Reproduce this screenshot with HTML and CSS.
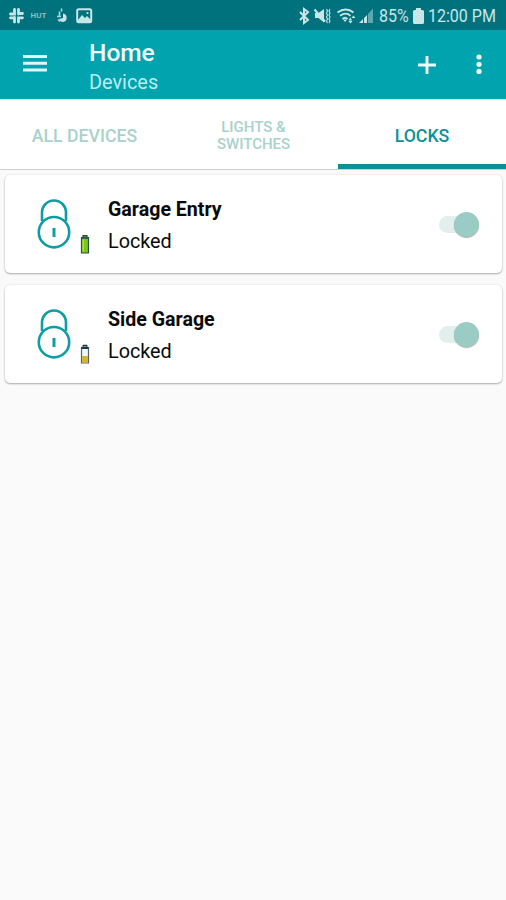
FILE: index.html
```html
<!DOCTYPE html>
<html lang="en">
<head>
  <meta charset="UTF-8">
  <title>Home - Devices</title>
  <meta name="viewport" content="width=device-width, initial-scale=1.0">
  <link rel="stylesheet" href="styles.css">
</head>
<body>
  <div class="status-bar">
    <div class="status-left">
      <svg width="86" height="18" viewBox="0 0 86 18">
        <g fill="none" stroke="#c7e6e8" stroke-width="2.8" stroke-linecap="round">
          <path d="M6.5 2.5v4.500H2.500M10.500 2.500v4.500M10.500 6.500h4M2.500 10.800h4M6.500 10.500v4.500M14.500 10.800h-4v4.200"/>
        </g>
        <text x="22.5" y="10.5" class="tiny" textLength="16" lengthAdjust="spacingAndGlyphs">HUT</text>
        <path d="M55 6.500a4.300 4.300 0 0 1 0 8.500q-3 0-4-3l4-1z" fill="#c7e6e8"/>
        <path d="M53.500 1.500v3M51.500 4.500v4.500M49 9.500h4M50 12.500l2 2" fill="none" stroke="#a9d5d8" stroke-width="1.600"/>
        <rect x="69.2" y="2.2" width="14" height="13" rx="1.5" fill="none" stroke="#c7e6e8" stroke-width="2"/>
        <path d="M70 13l4-5 3 3 2-2 4 4v2H70z" fill="#c7e6e8"/>
        <circle cx="79.5" cy="6" r="1.1" fill="#c7e6e8"/>
      </svg>
    </div>
    <div class="status-right">
      <svg width="78" height="18" viewBox="0 0 78 18">
        <path d="M2 5l8 8-4 3V2l4 3-8 8" fill="none" stroke="#c7e6e8" stroke-width="2"/>
        <path d="M17 6h3.500L26 2v13.500l-5.500-4.500h-3.500z" fill="#c7e6e8"/>
        <path d="M16.500 2.500l10.500 12" stroke="#c7e6e8" stroke-width="2"/>
        <path d="M28.500 2l1 2-1 2 1 2-1 2 1 2-1 2 1 2M32 2l-1 2 1 2-1 2 1 2-1 2 1 2-1 2" fill="none" stroke="#c7e6e8" stroke-width="1.100"/>
        <path d="M39.500 5.500q8.500-6 16 0M42 8.800q6-4.400 10.500 0M44.500 12q2.500-2.500 5 0" fill="none" stroke="#c7e6e8" stroke-width="1.800"/>
        <path d="M47 15l-2-2.500h4zM50.500 13.500l1.800-3 1.800 3zM53.500 11h4l-2-2.500zM50.500 14h4l-2 2.500z" fill="#c7e6e8"/>
        <path d="M61 16l4-4v4zM66 16v-5l3-3v8z" fill="#c7e6e8"/>
        <path d="M70 16V7l5-5.500V16z" fill="#5ba8ae"/>
      </svg>
      <span class="percent">85%</span>
      <svg class="status-battery" width="11" height="16" viewBox="0 0 11 16">
        <path d="M3 0h5v2h1.500q1.500 0 1.500 1.500v11q0 1.500-1.500 1.500h-8Q0 16 0 14.500v-11Q0 2 1.500 2H3z" fill="#c7e6e8"/>
      </svg>
      <span class="clock">12:00 PM</span>
    </div>
  </div>

  <header class="app-bar">
    <svg class="menu-icon" width="24" height="18" viewBox="0 0 24 18">
      <path d="M0 2.500h24M0 9.200h24M0 16h24" stroke="#dcf9fa" stroke-width="2.900"/>
    </svg>
    <div class="titles">
      <h1>Home</h1>
      <h2>Devices</h2>
    </div>
    <svg class="add-icon" width="18" height="18" viewBox="0 0 18 18">
      <path d="M9 0v18M0 9h18" stroke="#effdfd" stroke-width="2.900"/>
    </svg>
    <svg class="more-icon" width="6" height="20" viewBox="0 0 6 20">
      <g fill="#effdfd">
        <circle cx="3" cy="3" r="2.600"/>
        <circle cx="3" cy="10.300" r="2.600"/>
        <circle cx="3" cy="17.400" r="2.600"/>
      </g>
    </svg>
  </header>

  <nav class="tabs">
    <a class="tab">ALL DEVICES</a>
    <a class="tab small">LIGHTS &amp;<br>SWITCHES</a>
    <a class="tab active">LOCKS</a>
  </nav>

  <main class="devices">
    <div class="card">
      <svg class="lock" width="36" height="52" viewBox="0 0 36 52">
        <g fill="none" stroke="#0d9da3" stroke-width="2.600">
          <path d="M6 22V13.500a12 12 0 0 1 24 0V22"/>
          <circle cx="18" cy="33.200" r="15.200"/>
        </g>
        <path d="M18 29v9" stroke="#0d9da3" stroke-width="3"/>
      </svg>
      <svg class="battery" width="10" height="20" viewBox="0 0 10 20">
        <path d="M3 1.500h4v2h1.500v15.500h-7V3.500H3z" fill="#7cc51b" stroke="#2b5140" stroke-width="1.200"/>
        <path d="M3 1.700h4M1.500 4h7" stroke="#1d4b50" stroke-width="1.500"/>
        <path d="M3.300 5.500v12" stroke="#a8df4a" stroke-width="1.500"/>
      </svg>
      <div class="info">
        <div class="name">Garage Entry</div>
        <div class="state">Locked</div>
      </div>
      <div class="switch"></div>
    </div>

    <div class="card">
      <svg class="lock" width="36" height="52" viewBox="0 0 36 52">
        <g fill="none" stroke="#0d9da3" stroke-width="2.600">
          <path d="M6 22V13.500a12 12 0 0 1 24 0V22"/>
          <circle cx="18" cy="33.200" r="15.200"/>
        </g>
        <path d="M18 29v9" stroke="#0d9da3" stroke-width="3"/>
      </svg>
      <svg class="battery" width="10" height="20" viewBox="0 0 10 20">
        <path d="M3 1.500h4v2h1.500v15.500h-7V3.500H3z" fill="#eef5f3" stroke="#56645c" stroke-width="1.200"/>
        <path d="M2.100 12h5.800v6.400H2.100z" fill="#d5b32d"/>
        <path d="M3 1.700h4M1.500 4h7" stroke="#173b45" stroke-width="1.800"/>
      </svg>
      <div class="info">
        <div class="name">Side Garage</div>
        <div class="state">Locked</div>
      </div>
      <div class="switch"></div>
    </div>
  </main>
</body>
</html>
```
FILE: styles.css
```css
* {
  box-sizing: border-box;
}

body {
  margin: 0;
  min-height: 100vh;
  font-family: Roboto, "Liberation Sans", sans-serif;
  background-color: #fafafa;
}

svg {
  display: block;
  flex: none;
}

.status-bar {
  display: flex;
  justify-content: space-between;
  height: 30px;
  padding: 7px 9px 0 8px;
  background-color: #00727e;
  color: #c7e6e8;
}

.status-right {
  display: flex;
}

.tiny {
  font-size: 7px;
  font-weight: 700;
  fill: #85bdc3;
}

.percent,
.clock {
  font-size: 17.8px;
  line-height: 18px;
  white-space: nowrap;
  transform: scaleX(0.9);
  transform-origin: left;
}

.percent {
  width: 34px;
  margin-left: 3px;
}

.clock {
  width: 69px;
  margin-left: 4px;
}

.status-battery {
  margin-top: 1px;
}

.app-bar {
  display: flex;
  height: 69px;
  padding: 0 24px 0 23px;
  background-color: #00a3ae;
}

.menu-icon {
  margin-top: 24px;
}

.titles {
  flex: 1;
  padding: 9px 0 0 42px;
}

h1,
h2 {
  margin: 0;
}

h1 {
  font-size: 24.5px;
  line-height: 28px;
  font-weight: 500;
  color: #f1fdfd;
}

h2 {
  margin-top: 3px;
  font-size: 19.9px;
  line-height: 26px;
  font-weight: 400;
  color: #b9edef;
}

.add-icon {
  margin: 26px 40px 0 0;
}

.more-icon {
  margin-top: 24px;
}

.tabs {
  display: grid;
  grid-template-columns: 169px 169px 168px;
  height: 71px;
  background-color: #fff;
  border-top: 1px solid #c9eef0;
  border-bottom: 1px solid #cfcfcf;
}

.tab {
  display: flex;
  align-items: center;
  justify-content: center;
  padding-top: 2px;
  font-size: 17.7px;
  font-weight: 500;
  text-align: center;
  color: #a9d2cb;
}

.tab.small {
  font-size: 15px;
  line-height: 16.5px;
}

.tab.active {
  height: 69px;
  padding-top: 7px;
  color: #0b9299;
  border-bottom: 5px solid #0b9299;
}

.devices {
  display: flex;
  flex-direction: column;
  gap: 12px;
  padding: 5px 4px 0 5px;
}

.card {
  display: flex;
  height: 98px;
  padding-left: 31px;
  background-color: #fff;
  border-radius: 5px;
  box-shadow: 0 1px 2px rgba(0, 0, 0, 0.3), 0 0 2px rgba(0, 0, 0, 0.1);
}

.lock {
  margin-top: 24px;
}

.battery {
  margin: 59px 0 0 8px;
}

.info {
  flex: 1;
  padding: 21px 0 0 18px;
  color: #0a0a0a;
}

.name {
  font-size: 19.6px;
  line-height: 28px;
  font-weight: 700;
}

.state {
  margin-top: 4px;
  font-size: 19.8px;
  line-height: 28px;
}

/* small pill track with the round thumb at its right end */
.switch {
  display: flex;
  justify-content: flex-end;
  align-items: center;
  width: 40px;
  height: 17px;
  margin: 41px 23px 0 0;
  border-radius: 9px;
  background-color: #e2efec;
}

.switch::after {
  content: "";
  width: 25px;
  height: 25px;
  flex: none;
  border-radius: 50%;
  background-color: #9accc5;
  box-shadow: 0 1px 1px rgba(0, 0, 0, 0.3);
}
```
